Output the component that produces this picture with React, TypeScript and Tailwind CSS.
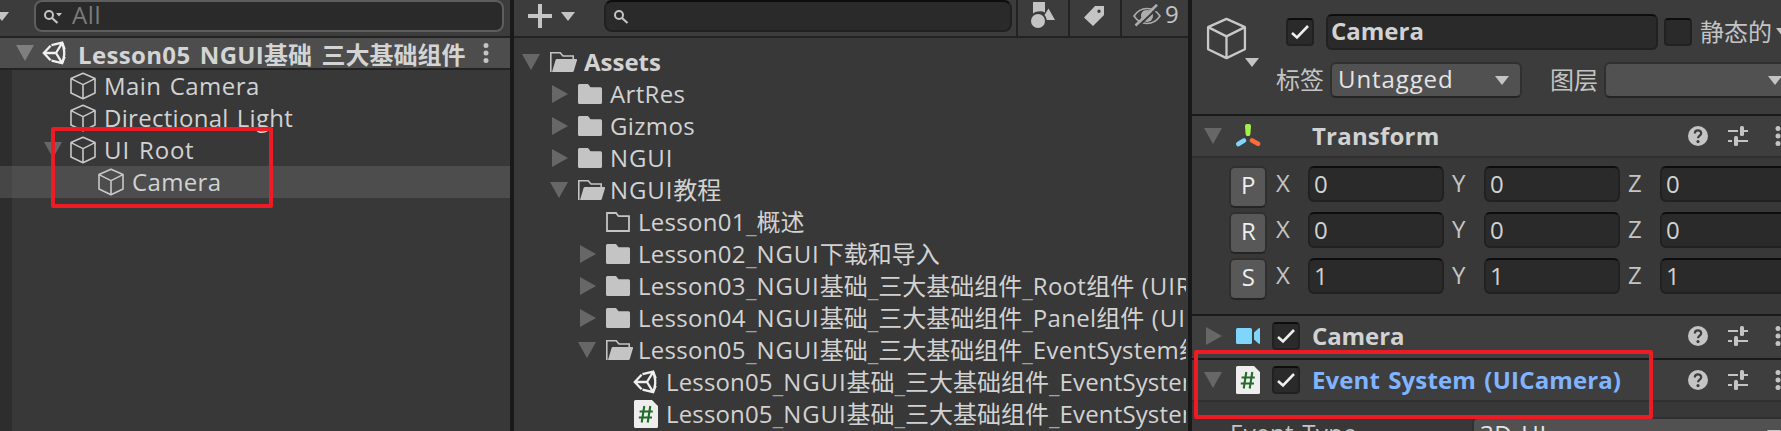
import React from "react";

const LATIN = "font-['Open_Sans','Noto_Sans_CJK_SC',sans-serif] leading-none";
const HAN = "font-['Noto_Sans_CJK_SC',sans-serif] leading-none";

function runClass(run: string, bold: boolean, latin: string) {
  if (/[\u4e00-\u9fff]/.test(run)) return HAN;
  if (run === "_") return `${LATIN} align-[-2px] ${bold ? "opacity-40 tracking-[-0.5px]" : "opacity-70"}`;
  if (/^\(?[A-Z]+$/.test(run) && run.length > 1) return `${LATIN} ${bold ? "tracking-[0.3px]" : "tracking-[0.9px]"}`;
  return `${LATIN} ${latin}`;
}

/* Mixed Latin / Han label: each script run gets its own face and tracking. */
function Label({
  text,
  bold = false,
  latin = "tracking-[0.35px]",
  className = "",
}: {
  text: string;
  bold?: boolean;
  latin?: string;
  className?: string;
}) {
  const runs = text.match(/[\u4e00-\u9fff]+|_|\(?[A-Z]{2,}(?![a-z])|(?:(?!_|\(?[A-Z]{2,}(?![a-z]))[^\u4e00-\u9fff])+/g) ?? [];
  return (
    <span className={`block h-8 shrink-0 whitespace-pre font-['Open_Sans','Noto_Sans_CJK_SC',sans-serif] text-[24px] leading-8 ${bold ? "font-bold" : ""} ${className}`}>
      {runs.map((run, i) => (
        <span key={i} className={runClass(run, bold, latin)}>
          {run}
        </span>
      ))}
    </span>
  );
}

function Caret({ className = "" }: { className?: string }) {
  return (
    <svg className={`block h-[9px] w-[14px] shrink-0 ${className}`} viewBox="0 0 14 9">
      <path d="M0 0h14L7 9z" fill="#c4c4c4" />
    </svg>
  );
}

function Fold({ open, className = "text-[#676767]" }: { open: boolean; className?: string }) {
  return (
    <svg className={`block size-[18px] shrink-0 ${className}`} viewBox="0 0 18 18">
      <path d={open ? "M0 1h18L9 17z" : "M2 0v18L18 9z"} fill="currentColor" />
    </svg>
  );
}

function Cube({ className = "h-7 w-[26px]", stroke = 1.6 }: { className?: string; stroke?: number }) {
  return (
    <svg className={`block shrink-0 ${className}`} viewBox="0 0 26 28" fill="none" stroke="#c8c8c8" strokeWidth={stroke} strokeLinejoin="round">
      <path d="M13 1.2 25 6.6V21L13 26.8 1 21V6.6zM1 6.6l12 6 12-6M13 12.6v14.2" />
    </svg>
  );
}

function UnityIcon() {
  return (
    <svg className="block size-6 shrink-0" viewBox="0 0 24 24" fill="none" stroke="#f0f0f0" strokeWidth="2.3" strokeLinejoin="miter">
      <path d="M9.5 4.2 20.2 1.6 22.7 8.5M22.7 15.5 20.2 22.2 9.5 19.6M8.6 4.8 1.8 12l6.8 7.2M1.8 12H14M14 12l6.2-10.2M14 12l6.2 10.2M20.8 3l1.4 7.2v3.6L20.8 21" />
    </svg>
  );
}

function ScriptIcon() {
  return (
    <svg className="block h-7 w-6 shrink-0" viewBox="0 0 24 28">
      <path d="M1.5 0H18l6 6v20.5a1.5 1.5 0 0 1-1.5 1.5h-21A1.5 1.5 0 0 1 0 26.5v-25A1.5 1.5 0 0 1 1.5 0z" fill="#eeeeee" />
      <path d="M10.3 6 7.7 22.5M16.3 6l-2.6 16.5M5.6 11.5h13.2M4.8 17.5H18" stroke="#236b28" strokeWidth="2.1" fill="none" />
    </svg>
  );
}

function Folder({ kind }: { kind: "closed" | "open" | "empty" }) {
  return (
    <svg className="block h-5 w-7 shrink-0" viewBox="0 0 28 20">
      {kind === "closed" && <path d="M1.5 0H10l2.5 3.2H22.5A1.5 1.5 0 0 1 24 4.7V18.5A1.5 1.5 0 0 1 22.5 20h-21A1.5 1.5 0 0 1 0 18.5v-17A1.5 1.5 0 0 1 1.5 0z" fill="#c4c4c4" />}
      {kind === "empty" && <path d="M1 1h9l2.5 3.2H23V19H1z" fill="none" stroke="#c4c4c4" strokeWidth="1.8" />}
      {kind === "open" && (
        <>
          <path d="M1.5 19.2H.8V.8h9.4L13 4h10.2v4" fill="none" stroke="#c4c4c4" strokeWidth="1.6" />
          <path d="M7 7h19a1 1 0 0 1 1 1.3L23.8 19a1.5 1.5 0 0 1-1.3 1H2L5.5 8.2A1.6 1.6 0 0 1 7 7z" fill="#c4c4c4" />
        </>
      )}
    </svg>
  );
}

function Search({ menu = false }: { menu?: boolean }) {
  return (
    <svg className="block h-[18px] w-5 shrink-0" viewBox="0 0 20 18" fill="none" stroke="#c4c4c4">
      <circle cx="5" cy="6" r="4" strokeWidth="2" />
      <path d="M8 9l5.5 5" strokeWidth="2.2" />
      {menu && <path d="M12 4h6l-3 3.6z" fill="#c4c4c4" stroke="none" />}
    </svg>
  );
}

function Dots() {
  return (
    <svg className="block h-5 w-[6px] shrink-0" viewBox="0 0 6 20" fill="#c4c4c4">
      <circle cx="3" cy="2.5" r="2.5" />
      <circle cx="3" cy="10" r="2.5" />
      <circle cx="3" cy="17.5" r="2.5" />
    </svg>
  );
}

function Check({ on = true, className = "" }: { on?: boolean; className?: string }) {
  return (
    <span className={`block size-7 shrink-0 rounded-[4px] border-2 border-[#212121] border-t-[#0d0d0d] bg-[#2a2a2a] ${className}`}>
      {on && (
        <svg className="block size-6" viewBox="0 0 24 24" fill="none" stroke="#eeeeee" strokeWidth="2.6">
          <path d="M4 13 9 17.5 20 6" />
        </svg>
      )}
    </span>
  );
}

/* ---------- Hierarchy ---------- */

function Hierarchy() {
  return (
    <section className="flex w-[510px] shrink-0 flex-col overflow-hidden bg-[#383838]">
      <div className="flex h-[38px] shrink-0 border-b-2 border-[#232323] bg-[#3c3c3c]">
        <Caret className="mt-3 -ml-[5px]" />
        <div className="ml-[25px] flex h-8 w-[470px] rounded-[8px] border-2 border-[#5e5e5e] bg-[#2a2a2a] pl-2">
          <div className="mt-[7px]">
            <Search menu />
          </div>
          <Label text="All" latin="tracking-[0.6px]" className="-mt-[3px] ml-2 text-[#7b7b7b]" />
        </div>
      </div>
      <div className="flex h-8 shrink-0 items-center border-b-2 border-[#232323] bg-[#4d4d4d] pl-4">
        <Fold open className="text-[#7f7f7f]" />
        <div className="ml-2">
          <UnityIcon />
        </div>
        <div className="ml-3 h-[30px] w-[389px] overflow-hidden">
          <Label bold latin="tracking-[0.35px]" text="Lesson05_NGUI基础_三大基础组件_" className="mt-px text-[#d4d4d4]" />
        </div>
        <div className="ml-[16px]">
          <Dots />
        </div>
      </div>
      <div className="flex flex-1">
        <div className="w-3 shrink-0 bg-[#2d2d2d] pt-24">
          <div className="h-8 bg-[#464646]" />
        </div>
        <div className="flex-1 text-[#d2d2d2]">
          <div className="flex h-8 items-center pl-[58px]">
            <Cube />
            <Label text="Main Camera" latin="tracking-[0.45px] [word-spacing:1.5px]" className="ml-2" />
          </div>
          <div className="flex h-8 items-center pl-[58px]">
            <Cube />
            <Label text="Directional Light" latin="tracking-[0.3px] [word-spacing:1.5px]" className="ml-2" />
          </div>
          <div className="flex h-8 items-center pl-8">
            <Fold open />
            <div className="ml-2">
              <Cube />
            </div>
            <Label text="UI Root" latin="tracking-[0.8px] [word-spacing:2px]" className="ml-2" />
          </div>
          <div className="flex h-8 items-center bg-[#4d4d4d] pl-[86px]">
            <Cube />
            <Label text="Camera" className="ml-2" />
          </div>
        </div>
      </div>
    </section>
  );
}

/* ---------- Project ---------- */

type Node = { depth: number; fold?: "open" | "shut"; icon: "closed" | "open" | "empty" | "scene" | "script"; text: string; bold?: boolean };

const NODES: Node[] = [
  { depth: 0, fold: "open", icon: "open", text: "Assets", bold: true },
  { depth: 1, fold: "shut", icon: "closed", text: "ArtRes" },
  { depth: 1, fold: "shut", icon: "closed", text: "Gizmos" },
  { depth: 1, fold: "shut", icon: "closed", text: "NGUI" },
  { depth: 1, fold: "open", icon: "open", text: "NGUI教程" },
  { depth: 2, icon: "empty", text: "Lesson01_概述" },
  { depth: 2, fold: "shut", icon: "closed", text: "Lesson02_NGUI下载和导入" },
  { depth: 2, fold: "shut", icon: "closed", text: "Lesson03_NGUI基础_三大基础组件_Root组件 (UIRoot)" },
  { depth: 2, fold: "shut", icon: "closed", text: "Lesson04_NGUI基础_三大基础组件_Panel组件 (UI" },
  { depth: 2, fold: "open", icon: "open", text: "Lesson05_NGUI基础_三大基础组件_EventSystem组件" },
  { depth: 3, icon: "scene", text: "Lesson05_NGUI基础_三大基础组件_EventSystem" },
  { depth: 3, icon: "script", text: "Lesson05_NGUI基础_三大基础组件_EventSystem" },
];

const INDENT = ["pl-2", "pl-9", "pl-16", "pl-[92px]"];
const TRACKING = ["tracking-[0px]", "tracking-[0.35px]", "tracking-[0.3px] [word-spacing:1px]", "tracking-[0.15px]"];

function Project() {
  return (
    <section className="flex w-[674px] shrink-0 flex-col overflow-hidden bg-[#383838]">
      <div className="flex h-[38px] shrink-0 border-b-2 border-[#232323] bg-[#3c3c3c]">
        <svg className="mt-1 ml-[14px] block size-6" viewBox="0 0 24 24">
          <path d="M10 0h4v10h10v4H14v10h-4V14H0v-4h10z" fill="#c4c4c4" />
        </svg>
        <Caret className="mt-3 ml-[9px]" />
        <div className="ml-[29px] flex h-8 w-[408px] rounded-[8px] border-2 border-[#212121] border-t-[#0d0d0d] bg-[#2a2a2a] pt-[7px] pl-2">
          <Search />
        </div>
        <div className="ml-1 flex w-[52px] justify-center border-l-2 border-[#232323]">
          <svg className="mt-[2px] block h-[26px] w-6" viewBox="0 0 24 26" fill="#c4c4c4">
            <path d="M2 0h12v10.5A9 9 0 0 0 7 9.5a9 9 0 0 0-5 2z" />
            <path d="M17.5 6.5 24 18h-8.2a9 9 0 0 0-2.3-5z" />
            <circle cx="7" cy="19" r="7" />
          </svg>
        </div>
        <div className="flex w-[52px] justify-center border-l-2 border-[#232323]">
          <svg className="mt-[6px] -ml-[2px] block size-5" viewBox="0 0 20 20">
            <path fillRule="evenodd" d="M11 0h9v9L9 20 0 11.5zM15 3.5a1.7 1.7 0 1 0 0 3.4 1.7 1.7 0 0 0 0-3.4z" fill="#c4c4c4" />
          </svg>
        </div>
        <div className="flex flex-1 border-l-2 border-[#232323] pl-[11px]">
          <svg className="mt-1 block h-6 w-7" viewBox="0 0 28 24" fill="none" stroke="#adadad">
            <path d="M1 12C5 6 9 4.5 14 4.5S23 6 27 12c-4 6-8 7.5-13 7.5S5 18 1 12z" strokeWidth="1.6" />
            <path d="M20 12a6 6 0 1 1-12 0c0-3 1.5-6 6-6s6 3 6 6z" fill="#adadad" stroke="none" />
            <path d="M4.5 23 26 2.5" stroke="#3c3c3c" strokeWidth="2" />
            <path d="M2.5 21.5 24 .8" strokeWidth="2.6" />
          </svg>
          <Label text="9" className="-mt-[2px] ml-[4px] text-[#c4c4c4]" />
        </div>
      </div>
      <div className="mr-[2px] overflow-hidden pt-2 text-[#d2d2d2]">
        {NODES.map((n, i) => (
          <div key={i} className={`flex h-8 items-center ${INDENT[n.depth]}`}>
            {n.fold ? <Fold open={n.fold === "open"} /> : <span className="block w-[18px] shrink-0" />}
            <span className={`ml-[10px] flex w-8 shrink-0 ${n.icon === "scene" ? "-translate-x-px" : ""}`}>
              {n.icon === "scene" ? <UnityIcon /> : n.icon === "script" ? <ScriptIcon /> : <Folder kind={n.icon} />}
            </span>
            <Label text={n.text} bold={n.bold} latin={TRACKING[n.depth]} className={n.bold ? "ml-[2px]" : ""} />
          </div>
        ))}
      </div>
    </section>
  );
}

/* ---------- Inspector ---------- */

function HeaderTools() {
  return (
    <div className="ml-auto flex shrink-0 items-center">
      <svg className="block size-5" viewBox="0 0 20 20">
        <circle cx="10" cy="10" r="10" fill="#c4c4c4" />
        <path d="M6.8 7.5C6.8 5.4 8.2 4.3 10 4.3s3.2 1.1 3.2 2.9c0 2.4-3.2 2.5-3.2 5" fill="none" stroke="#3e3e3e" strokeWidth="2.2" />
        <circle cx="10" cy="15.6" r="1.6" fill="#3e3e3e" />
      </svg>
      <svg className="ml-5 block size-5" viewBox="0 0 20 20" fill="#c4c4c4">
        <path d="M0 4h10v2H0zM16 4h4v2h-4zM0 14h4v2H0zM8 14h12v2H8z" />
        <rect x="12" width="4" height="10" rx="1.5" />
        <rect x="6" y="10" width="4" height="10" rx="1.5" />
      </svg>
      <div className="ml-[27px]">
        <Dots />
      </div>
    </div>
  );
}

function Field({ value, className = "w-[136px]" }: { value: string; className?: string }) {
  return (
    <div className={`h-9 shrink-0 rounded-[6px] border-2 border-[#212121] border-t-[#0d0d0d] bg-[#2a2a2a] pl-1 text-[#d2d2d2] ${className}`}>
      <Label text={value} />
    </div>
  );
}

function VectorRow({ name, value }: { name: string; value: string }) {
  return (
    <div className="flex h-[46px] pl-[37px] text-[#c4c4c4]">
      <div className="h-[42px] w-[38px] shrink-0 rounded-[6px] border-2 border-[#303030] border-b-[#242424] bg-[#585858] pt-px pl-px text-center text-[#eeeeee]">
        <Label text={name} />
      </div>
      <Label text="X" className="mt-px ml-[9px] w-8" />
      <Field value={value} />
      <Label text="Y" className="mt-px ml-2 w-8" />
      <Field value={value} />
      <Label text="Z" className="mt-px ml-2 w-8" />
      <Field value={value} className="w-[160px]" />
    </div>
  );
}

const SELECT = "flex h-9 shrink-0 rounded-[6px] border-2 border-[#303030] border-b-[#242424] bg-[#515151]";

function Inspector() {
  return (
    <section className="w-[589px] shrink-0 overflow-hidden bg-[#383838]">
      <div className="flex h-[116px] overflow-hidden border-b-2 border-[#1a1a1a] bg-[#3c3c3c]">
        <Cube className="mt-[17px] ml-[14px] h-[43px] w-[41px]" stroke={1.5} />
        <Caret className="mt-[58px] -ml-[2px]" />
        <div className="ml-[17px] w-[560px] shrink-0 pt-[14px]">
          <div className="flex h-9 items-center text-[#c4c4c4]">
            <Check className="ml-[10px]" />
            <div className="ml-3 h-9 w-[332px] shrink-0 rounded-[6px] border-2 border-[#212121] border-t-[#0d0d0d] bg-[#2a2a2a] pl-[3px] text-[#d2d2d2]">
              <Label bold text="Camera" latin="tracking-[0px]" className="-mt-px" />
            </div>
            <Check on={false} className="ml-[6px]" />
            <Label text="静态的" className="ml-2" />
            <Caret className="ml-1" />
          </div>
          <div className="mt-3 flex h-9 items-center text-[#c4c4c4]">
            <Label text="标签" />
            <div className={`${SELECT} ml-[6px] w-[192px] items-center justify-between pr-[11px] pl-[6px] text-[#e4e4e4]`}>
              <Label text="Untagged" latin="tracking-[0.9px]" className="-mt-[3px]" />
              <Caret />
            </div>
            <Label text="图层" className="ml-[28px]" />
            <div className={`${SELECT} ml-[6px] w-[200px] items-center pl-[162px]`}>
              <Caret />
            </div>
          </div>
        </div>
      </div>

      <div className="flex h-[42px] w-[589px] items-center border-b-2 border-[#303030] bg-[#3e3e3e] pl-3">
        <Fold open />
        <svg className="ml-[13px] block h-6 w-[26px]" viewBox="0 0 26 24" strokeLinecap="round" fill="none">
          <path d="M10 2q0-2 2-2h2q2 0 2 2l-.6 8q-.2 2-1.6 2h-1.6q-1.4 0-1.6-2z" fill="#a3f248" />
          <path d="M9 16.6 3.3 20" stroke="#7fd6fd" strokeWidth="4.6" />
          <path d="M17 16.4l6 3.4" stroke="#ff6a3a" strokeWidth="4.6" />
        </svg>
        <Label bold text="Transform" latin="tracking-[0.2px]" className="ml-[51px] text-[#d2d2d2]" />
        <HeaderTools />
      </div>
      <div className="h-[156px] overflow-hidden pt-2">
        <VectorRow name="P" value="0" />
        <VectorRow name="R" value="0" />
        <VectorRow name="S" value="1" />
      </div>

      <div className="flex h-[46px] w-[589px] items-center border-y-2 border-[#1a1a1a] bg-[#3e3e3e] pb-[2px] pl-3">
        <Fold open={false} />
        <svg className="ml-[14px] block h-4 w-6" viewBox="0 0 24 16" fill="#7fd6fd">
          <rect width="16" height="16" rx="1.5" />
          <path d="M18 4.5 22.5.4Q24-.4 24 1v14q0 1.4-1.5.6L18 11.5z" />
        </svg>
        <Check className="ml-3" />
        <Label bold text="Camera" latin="tracking-[-0.1px]" className="ml-3 text-[#d2d2d2]" />
        <HeaderTools />
      </div>
      <div className="flex h-[42px] w-[589px] items-center border-b-2 border-[#303030] bg-[#3e3e3e] pl-3">
        <Fold open />
        <div className="ml-[14px]">
          <ScriptIcon />
        </div>
        <Check className="ml-3" />
        <Label bold text="Event System (UICamera)" latin="tracking-[0.1px] [word-spacing:2px]" className="ml-3 text-[#81b4ff]" />
        <HeaderTools />
      </div>
      <div className="flex pt-[15px] pl-[38px]">
        <Label text="Event Type" latin="tracking-[0.4px] [word-spacing:1.5px]" className="w-[242px] text-[#c4c4c4]" />
        <div className={`${SELECT} w-[400px] pl-[6px] text-[#e4e4e4]`}>
          <Label text="3D UI" latin="tracking-[0.6px] [word-spacing:2px]" className="-mt-px w-[287px]" />
          <Caret className="mt-[11px]" />
        </div>
      </div>
    </section>
  );
}

export default function App() {
  return (
    <main className="relative flex h-[431px] w-[1781px] overflow-hidden bg-[#383838]">
      <Hierarchy />
      <div className="w-1 shrink-0 bg-[#191919]" />
      <Project />
      <div className="w-1 shrink-0 bg-[#191919]" />
      <Inspector />
      <div className="absolute top-[127px] left-[51px] h-[81px] w-[222px] rounded-[2px] border-4 border-[#ed1c24]" />
      <div className="absolute top-[350px] left-[1194px] h-[69px] w-[459px] rounded-[2px] border-4 border-[#ed1c24]" />
    </main>
  );
}
